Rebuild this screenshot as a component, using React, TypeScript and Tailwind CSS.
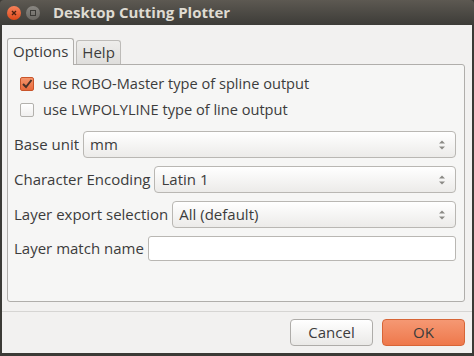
import { useState } from 'react';

const rows = [
  { label: 'Base unit', value: 'mm', kind: 'select' },
  { label: 'Character Encoding', value: 'Latin 1', kind: 'select' },
  { label: 'Layer export selection', value: 'All (default)', kind: 'select' },
  { label: 'Layer match name', value: '', kind: 'input' },
];

function Spinner() {
  return (
    <svg width="8" height="14" viewBox="0 0 8 14" className="shrink-0">
      <path d="M1 5.5 L4 2.5 L7 5.5 Z" fill="#8a8985" />
      <path d="M1 8.5 L4 11.5 L7 8.5 Z" fill="#8a8985" />
    </svg>
  );
}

function Checkbox({ checked, label }: { checked: boolean; label: string }) {
  return (
    <div className="flex items-center h-[26px] pl-[12px]">
      {checked ? (
        <div className="w-[14px] h-[14px] rounded-[2px] border border-[#c9552a] bg-gradient-to-b from-[#f4946b] to-[#e9693a] flex items-center justify-center">
          <svg width="12" height="12" viewBox="0 0 12 12">
            <path d="M2 6 L5 9 L10.5 2" fill="none" stroke="#4a3128" strokeWidth="2" />
          </svg>
        </div>
      ) : (
        <div className="w-[14px] h-[14px] rounded-[2px] border border-[#b3b1ad] bg-gradient-to-b from-white to-[#f0efee]" />
      )}
      <span className="ml-[9px] text-[14.6px]">{label}</span>
    </div>
  );
}

export default function App() {
  const [tab] = useState('Options');

  return (
    <div
      className="w-[474px] h-[356px] bg-[#3b3a36] flex flex-col text-[15px] text-[#3c3c3c]"
      style={{ fontFamily: '"Open Sans", "DejaVu Sans", sans-serif' }}
    >
      {/* Title bar */}
      <div className="h-[25px] flex items-center px-[7px] rounded-t-[4px] bg-gradient-to-b from-[#5d5952] to-[#3d3c38]">
        <div className="w-[14px] h-[14px] rounded-full bg-gradient-to-b from-[#f7825a] to-[#dd4814] flex items-center justify-center">
          <svg width="8" height="8" viewBox="0 0 8 8">
            <path d="M2 2 L6 6 M6 2 L2 6" stroke="#4a2010" strokeWidth="1.4" />
          </svg>
        </div>
        <div className="ml-[5px] w-[14px] h-[14px] rounded-full bg-gradient-to-b from-[#8a8782] to-[#6a6863] flex items-center justify-center">
          <div className="w-[6px] h-[6px] border border-[#3b3a36]" />
        </div>
        <span className="ml-[13px] font-bold text-[#dfdbd2] text-[15px]">Desktop Cutting Plotter</span>
      </div>

      {/* Body */}
      <div className="flex-1 mx-[2px] mb-[3px] bg-[#f2f1f0] flex flex-col px-[5px] pt-[12px]">
        <div className="flex items-end h-[27px]">
          <div className="h-[27px] px-[5px] border border-b-0 border-[#b0aeab] rounded-t-[3px] bg-[#f6f6f5] flex items-center relative z-10 -mb-px pb-px">
            {tab}
          </div>
          <div className="ml-[2px] h-[24px] px-[5px] border border-b-0 border-[#bdbbb8] rounded-t-[3px] bg-gradient-to-b from-[#eeedeb] to-[#dfdedc] flex items-center">
            Help
          </div>
        </div>
        <div className="h-[238px] w-[458px] border border-[#b0aeab] rounded-b-[3px] rounded-tr-[3px] bg-[#f6f6f5] flex flex-col pt-[6px]">
          <Checkbox checked label="use ROBO-Master type of spline output" />
          <Checkbox checked={false} label="use LWPOLYLINE type of line output" />
          <div className="flex flex-col gap-[8px] mt-[8px] pl-[6px] pr-[8px]">
            {rows.map((r) => (
              <div key={r.label} className="flex items-center">
                <span className="mr-[4px] whitespace-nowrap">{r.label}</span>
                {r.kind === 'select' ? (
                  <div className="flex-1 h-[27px] rounded-[4px] border border-[#b9b7b3] bg-gradient-to-b from-white to-[#ecebe9] flex items-center pl-[6px] pr-[9px]">
                    <span className="flex-1">{r.value}</span>
                    <Spinner />
                  </div>
                ) : (
                  <div className="flex-1 h-[25px] rounded-[3px] border border-[#b9b7b3] bg-white" />
                )}
              </div>
            ))}
          </div>
        </div>
        <div className="mt-[9px] -mx-[5px] h-px bg-[#d6d5d3]" />
        <div className="flex justify-end gap-[9px] mt-[7px] pr-[2px]">
          <div className="w-[83px] h-[27px] rounded-[4px] border border-[#aeaca9] bg-gradient-to-b from-white to-[#eae9e7] flex items-center justify-center">
            Cancel
          </div>
          <div className="w-[83px] h-[27px] rounded-[4px] border border-[#d76537] bg-gradient-to-b from-[#f59873] to-[#ee784b] flex items-center justify-center">
            OK
          </div>
        </div>
      </div>
    </div>
  );
}
